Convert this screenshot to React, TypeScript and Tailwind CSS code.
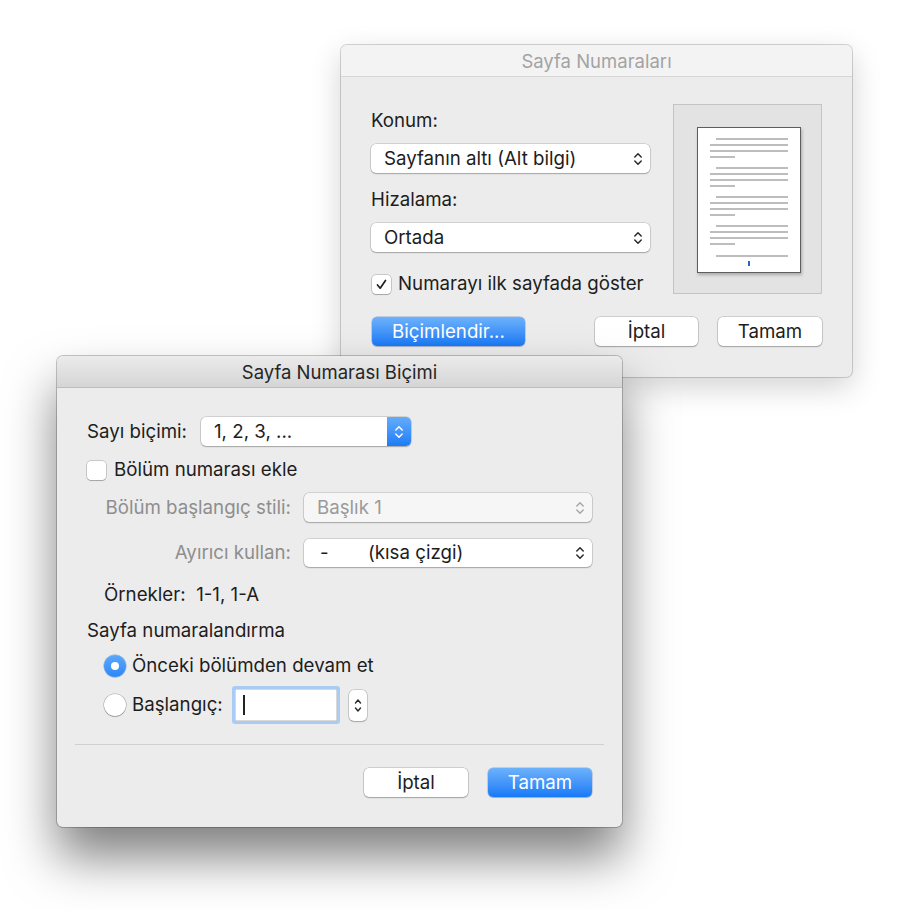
import React from "react";

function Chevrons({ className = "" }: { className?: string }) {
  return (
    <svg width="10" height="16" viewBox="0 0 10 16" className={className} fill="none">
      <path d="M1.8 6 L5 2.8 L8.2 6" stroke="currentColor" strokeWidth="1.5" strokeLinecap="round" strokeLinejoin="round" />
      <path d="M1.8 10 L5 13.2 L8.2 10" stroke="currentColor" strokeWidth="1.5" strokeLinecap="round" strokeLinejoin="round" />
    </svg>
  );
}

function Select({
  label,
  width,
  height = "h-[29px]",
  disabled = false,
}: {
  label: React.ReactNode;
  width: string;
  height?: string;
  disabled?: boolean;
}) {
  return (
    <div
      className={`flex ${width} ${height} items-center justify-between rounded-[5px] pl-[13px] pr-[7px] shadow-[0_0_0_0.5px_rgba(0,0,0,0.22),0_1px_1.5px_rgba(0,0,0,0.22)] ${
        disabled ? "bg-[#f6f6f6] text-[#9a9a9a]" : "bg-white text-[#1d1d1d]"
      }`}
    >
      <span className="whitespace-pre">{label}</span>
      <Chevrons className={disabled ? "text-[#a8a8a8]" : "text-[#2a2a2a]"} />
    </div>
  );
}

function Button({ children, primary = false, width }: { children: React.ReactNode; primary?: boolean; width: string }) {
  return (
    <div
      className={`flex h-[29px] ${width} items-center justify-center rounded-[5px] ${
        primary
          ? "bg-gradient-to-b from-[#6cb1fb] to-[#1479f6] text-white shadow-[0_0_0_0.5px_rgba(0,60,180,0.35),0_1px_1px_rgba(0,0,0,0.15)]"
          : "bg-white text-[#1d1d1d] shadow-[0_0_0_0.5px_rgba(0,0,0,0.25),0_1px_1.5px_rgba(0,0,0,0.22)]"
      }`}
    >
      {children}
    </div>
  );
}

function Checkbox({ checked }: { checked: boolean }) {
  return (
    <div className="flex h-[19px] w-[19px] shrink-0 items-center justify-center rounded-[4px] bg-white shadow-[0_0_0_0.5px_rgba(0,0,0,0.3),0_1px_1px_rgba(0,0,0,0.18)]">
      {checked && (
        <svg width="13" height="13" viewBox="0 0 13 13" fill="none">
          <path d="M2.5 7 L5.2 10.2 L10.5 2.5" stroke="#1f1f1f" strokeWidth="1.7" strokeLinecap="round" strokeLinejoin="round" />
        </svg>
      )}
    </div>
  );
}

function Radio({ checked }: { checked: boolean }) {
  return checked ? (
    <div className="flex h-[22px] w-[22px] shrink-0 items-center justify-center rounded-full bg-gradient-to-b from-[#5aa8fb] to-[#2a88f7] shadow-[0_0_0_0.5px_rgba(0,70,190,0.4)]">
      <div className="h-[8px] w-[8px] rounded-full bg-white" />
    </div>
  ) : (
    <div className="h-[22px] w-[22px] shrink-0 rounded-full bg-white shadow-[0_0_0_0.5px_rgba(0,0,0,0.3),0_1px_1px_rgba(0,0,0,0.18)]" />
  );
}

function PagePreview() {
  const para = (
    <div className="flex flex-col gap-[4px]">
      <div className="ml-[18px] h-[2px] w-[72px] bg-[#bdbdbd]" />
      <div className="ml-[12px] h-[2px] w-[78px] bg-[#bdbdbd]" />
      <div className="ml-[12px] h-[2px] w-[78px] bg-[#bdbdbd]" />
      <div className="ml-[12px] h-[2px] w-[25px] bg-[#bdbdbd]" />
    </div>
  );
  return (
    <div className="flex h-[190px] w-[149px] items-start justify-center border border-[#c4c4c4] bg-[#e3e3e3] pt-[22px] pl-[2px]">
      <div className="flex h-[146px] w-[104px] flex-col border border-[#5e5e5e] bg-white pt-[10px] shadow-[1px_2px_3px_rgba(0,0,0,0.25)]">
        <div className="flex flex-col gap-[9px]">
          {para}
          {para}
          {para}
          {para}
        </div>
        <div className="mt-[10px] ml-[18px] h-[2px] w-[72px] bg-[#bdbdbd]" />
        <div className="mt-[4px] ml-[50px] h-[5px] w-[2px] bg-[#2a64c4]" />
      </div>
    </div>
  );
}

export default function App() {
  return (
    <div className="relative h-[910px] w-[900px] overflow-hidden bg-white font-['Inter','Noto_Sans',sans-serif] text-[18.7px] leading-[20px] text-[#1d1d1d]">
      {/* back window: Sayfa Numaraları */}
      <div className="absolute left-[341px] top-[45px] flex h-[332px] w-[511px] flex-col overflow-hidden rounded-[6px] bg-[#ececec] shadow-[0_0_0_1px_rgba(0,0,0,0.16),0_10px_30px_rgba(0,0,0,0.18)]">
        <div className="flex h-[32px] shrink-0 items-center justify-center border-b border-[#d6d6d6] bg-[#f3f3f3] text-[18.5px] text-[#a3a3a3]">
          Sayfa Numaraları
        </div>
        <div className="flex flex-col px-[30px] pt-[27px]">
          <div className="flex justify-between">
            <div className="flex flex-col pt-[7px]">
              <div className="h-[20px]">Konum:</div>
              <div className="mt-[13px]">
                <Select label="Sayfanın altı (Alt bilgi)" width="w-[279px]" />
              </div>
              <div className="mt-[17px] h-[20px]">Hizalama:</div>
              <div className="mt-[13px]">
                <Select label="Ortada" width="w-[279px]" />
              </div>
              <div className="mt-[22px] flex h-[20px] items-center gap-[7px] pl-[1px]">
                <Checkbox checked />
                <span>Numarayı ilk sayfada göster</span>
              </div>
            </div>
            <PagePreview />
          </div>
          <div className="mt-[23px] flex items-center pl-[1px]">
            <Button primary width="w-[153px]">Biçimlendir...</Button>
            <div className="ml-auto flex gap-[20px]">
              <Button width="w-[103px]">İptal</Button>
              <Button width="w-[104px]">Tamam</Button>
            </div>
          </div>
        </div>
      </div>

      {/* front window: Sayfa Numarası Biçimi */}
      <div className="absolute left-[57px] top-[356px] flex h-[471px] w-[565px] flex-col overflow-hidden rounded-[6px] bg-[#ececec] shadow-[0_0_0_1px_rgba(0,0,0,0.22),0_30px_50px_rgba(0,0,0,0.5)]">
        <div className="flex h-[32px] shrink-0 items-center justify-center border-b border-[#bdbdbd] bg-gradient-to-b from-[#ebebeb] to-[#d5d5d5] text-[18.5px] text-[#262626]">
          Sayfa Numarası Biçimi
        </div>
        <div className="flex flex-col pl-[30px] pr-[30px] pt-[29px]">
          <div className="flex items-center">
            <span className="w-[114px]">Sayı biçimi:</span>
            <div className="flex h-[29px] w-[210px] items-center rounded-[5px] bg-white shadow-[0_0_0_0.5px_rgba(0,0,0,0.22),0_1px_1.5px_rgba(0,0,0,0.22)]">
              <span className="flex-1 pl-[13px]">1, 2, 3, ...</span>
              <div className="flex h-full w-[24px] items-center justify-center rounded-r-[5px] bg-gradient-to-b from-[#64acfb] to-[#1a7cf6] text-white">
                <Chevrons />
              </div>
            </div>
          </div>
          <div className="mt-[14px] flex h-[20px] items-center gap-[8px]">
            <Checkbox checked={false} />
            <span>Bölüm numarası ekle</span>
          </div>
          <div className="mt-[13px] flex items-center">
            <span className="w-[217px] pr-[13px] text-right text-[#8e8e8e]">Bölüm başlangıç stili:</span>
            <Select label="Başlık 1" width="w-[288px]" disabled />
          </div>
          <div className="mt-[17px] flex items-center">
            <span className="w-[217px] pr-[13px] text-right text-[#8e8e8e]">Ayırıcı kullan:</span>
            <Select
              label={
                <span className="flex">
                  <span className="w-[51px] pl-[3px] text-[#1d1d1d]">-</span>
                  <span className="text-[#1d1d1d]">(kısa çizgi)</span>
                </span>
              }
              width="w-[288px]"
              height="h-[28px]"
            />
          </div>
          <div className="mt-[18px] h-[20px] pl-[17px]">Örnekler:&nbsp; 1-1, 1-A</div>
          <div className="mt-[16px] h-[20px]">Sayfa numaralandırma</div>
          <div className="mt-[15px] flex h-[20px] items-center gap-[6px] pl-[17px]">
            <Radio checked />
            <span>Önceki bölümden devam et</span>
          </div>
          <div className="mt-[10px] flex h-[38px] items-center pl-[17px]">
            <Radio checked={false} />
            <span className="ml-[6px] w-[90px]">Başlangıç:</span>
            <div className="ml-[10px] flex h-[38px] w-[108px] items-center rounded-[3px] bg-[#a9cbf6] p-[3px]">
              <div className="flex h-full w-full items-center bg-white pl-[8px] shadow-[inset_0_0_0_0.5px_rgba(0,0,0,0.3)]">
                <div className="h-[20px] w-[1.5px] bg-[#222]" />
              </div>
            </div>
            <div className="ml-[9px] flex h-[31px] w-[18px] items-center justify-center rounded-[5px] bg-white shadow-[0_0_0_0.5px_rgba(0,0,0,0.25),0_1px_1.5px_rgba(0,0,0,0.2)] text-[#2a2a2a]">
              <svg width="8" height="17" viewBox="0 0 8 17" fill="none">
                <path d="M1.5 6 L4 3 L6.5 6" stroke="currentColor" strokeWidth="1.4" strokeLinecap="round" strokeLinejoin="round" />
                <path d="M1.5 11 L4 14 L6.5 11" stroke="currentColor" strokeWidth="1.4" strokeLinecap="round" strokeLinejoin="round" />
              </svg>
            </div>
          </div>
          <div className="-mx-[12px] mt-[20px] h-px bg-[#d0d0d0]" />
          <div className="mt-[23px] flex justify-end gap-[20px]">
            <Button width="w-[104px]">İptal</Button>
            <Button primary width="w-[104px]">Tamam</Button>
          </div>
        </div>
      </div>
    </div>
  );
}
